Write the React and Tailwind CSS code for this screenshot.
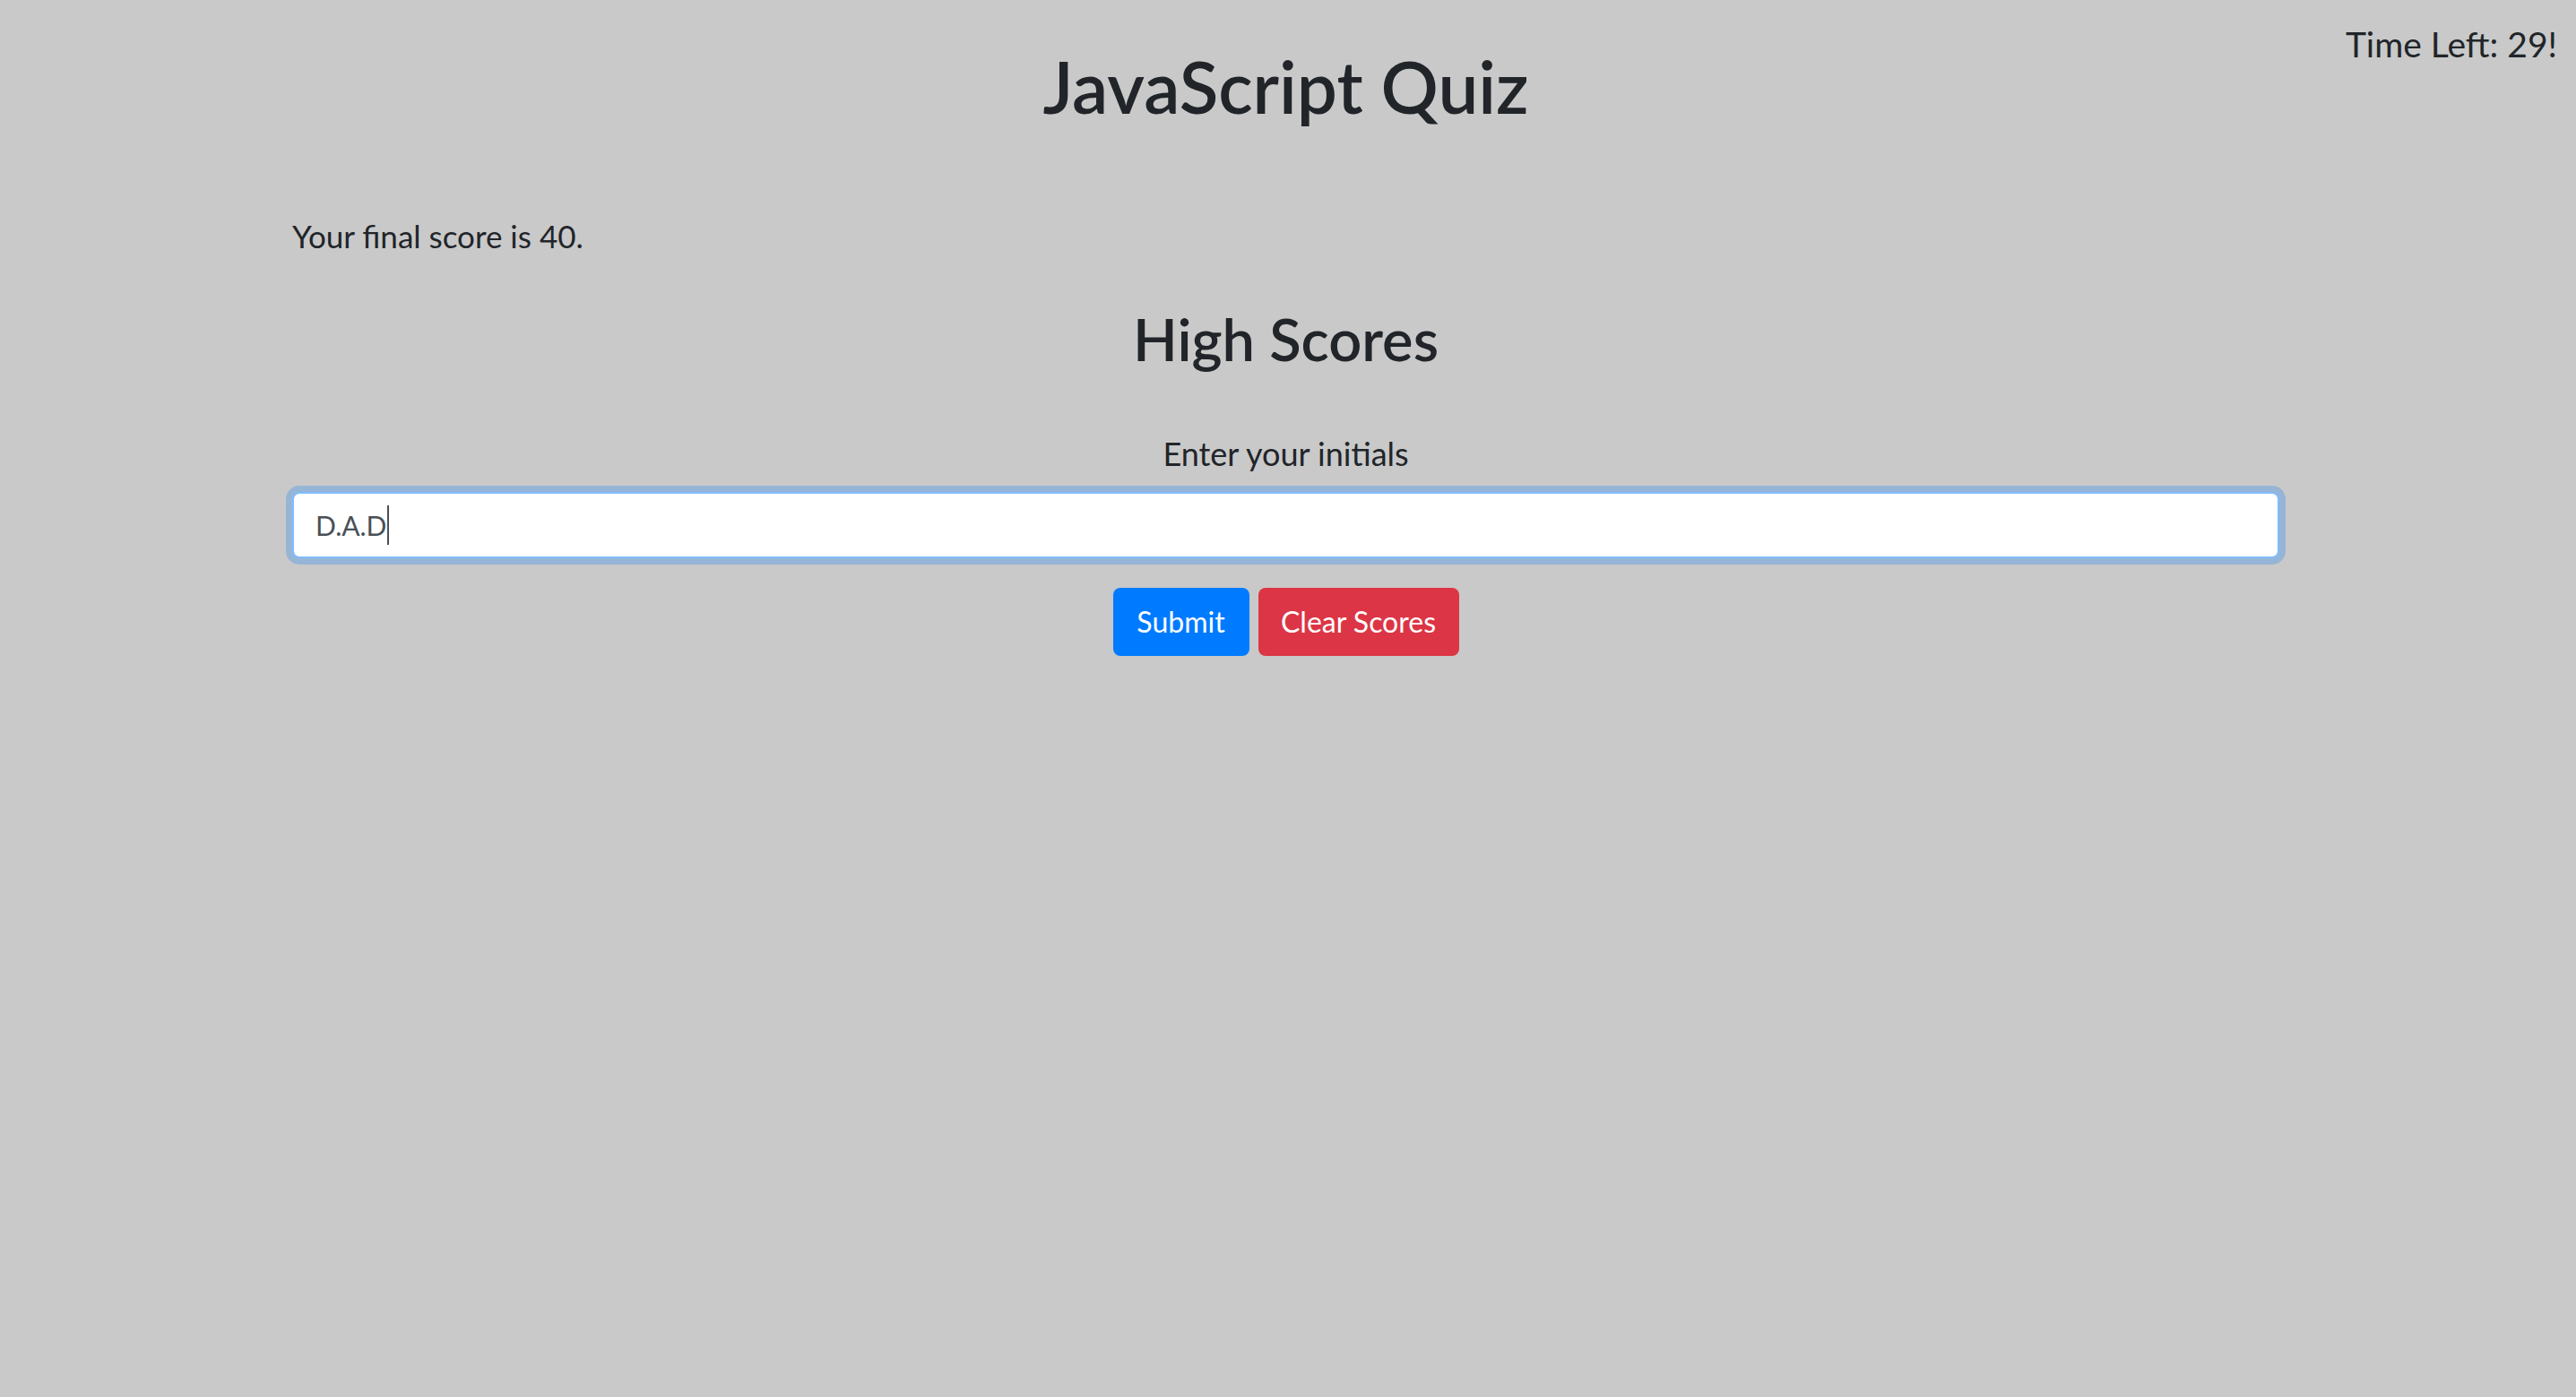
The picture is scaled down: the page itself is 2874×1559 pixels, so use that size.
import React from "react";

export default function App() {
  return (
    <div className="relative min-h-[1559px] w-full bg-[#c9c9c9] text-[#212529] font-['Lato','Open_Sans',sans-serif]">
      <div className="absolute right-[21px] top-[30px] text-[39px] leading-none">
        Time Left: 29!
      </div>
      <div className="ml-[326px] flex w-[2217px] flex-col pt-[56px]">
        <h1 className="text-center text-[80px] font-semibold leading-none">JavaScript Quiz</h1>
        <p className="mt-[110px] text-[35px] leading-none">Your final score is 40.</p>
        <h2 className="mt-[65px] text-center text-[65px] font-semibold leading-none">High Scores</h2>
        <p className="mt-[77px] text-center text-[36px] leading-none">Enter your initials</p>
        <div className="mt-[25px] flex h-[74px] items-center rounded-[8px] border-2 border-[#80bdff] bg-white px-[24px] text-[30px] text-[#495057] shadow-[0_0_0_7px_rgba(0,123,255,0.25)]">
          <span className="leading-none">D.A.D</span>
          <span className="ml-[1px] h-[44px] w-[2px] bg-[#495057]"></span>
        </div>
        <div className="mt-[33px] flex justify-center gap-[10px]">
          <button className="flex h-[76px] w-[152px] items-center justify-center rounded-[8px] bg-[#007bff] text-[32px] leading-none text-white">
            Submit
          </button>
          <button className="flex h-[76px] w-[224px] items-center justify-center rounded-[8px] bg-[#dc3545] text-[32px] leading-none text-white">
            Clear Scores
          </button>
        </div>
      </div>
    </div>
  );
}
